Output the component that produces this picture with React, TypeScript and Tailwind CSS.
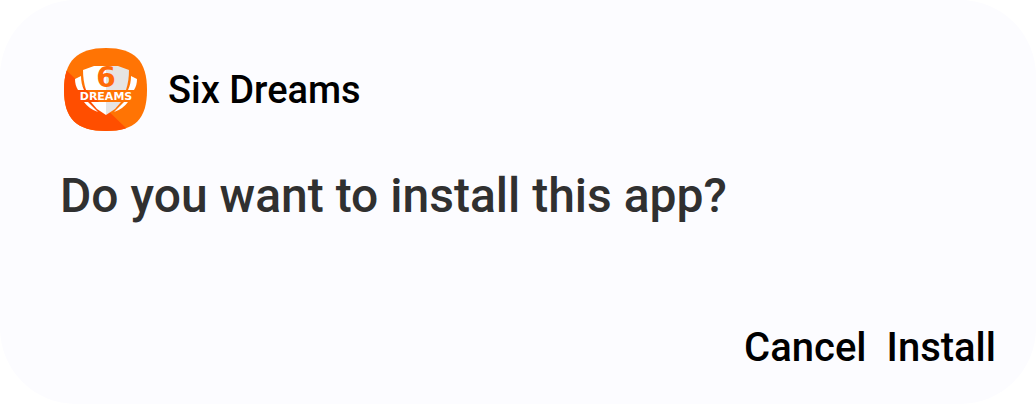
const AppLogo = () => (
  <svg viewBox="0 0 84 84" className="size-21 shrink-0" role="img" aria-label="Six Dreams logo">
    <defs>
      <clipPath id="tile">
        <path d="M42 0C71 0 83 13 83 42S71 83 42 83 0 71 0 42 13 0 42 0Z" />
      </clipPath>
    </defs>
    <g clipPath="url(#tile)">
      <rect width="84" height="84" fill="#ff7404" />
      <path d="M0 20L66 84H0Z" fill="#ff4e00" />
    </g>
    {/* shield, right half shaded */}
    <path d="M19 22L30 18H42V42H22C20 36 19 29 19 22Z" fill="#fff" />
    <path d="M65 22L54 18H42V42H62C64 36 65 29 65 22Z" fill="#e6e4e3" />
    <path d="M11 31L17 28C17 33 18 38 20 42H14C12 39 11 35 11 31Z" fill="#fff" />
    <path d="M73 31L67 28C67 33 66 38 64 42H70C72 39 73 35 73 31Z" fill="#fff" />
    <path d="M27 54H42V67L33 61Z" fill="#fff" />
    <path d="M57 54H42V67L51 61Z" fill="#e6e4e3" />
    <path d="M20 54H24L34 64Q25 61 20 54Z" fill="#fff" />
    <path d="M64 54H60L50 64Q59 61 64 54Z" fill="#fff" />
    <text x="42" y="39" textAnchor="middle" fill="#ff6a08" className="font-['DejaVu_Sans'] text-[28px] font-bold">
      6
    </text>
    <text x="42" y="52" textAnchor="middle" fill="#fff" className="font-['DejaVu_Sans'] text-[11px] font-bold">
      DREAMS
    </text>
  </svg>
);

type ActionButtonProps = {
  label: string;
};

const ActionButton = ({ label }: ActionButtonProps) => (
  <button type="button" className="cursor-pointer text-[40px] leading-12 font-medium text-black">
    {label}
  </button>
);

export default function App() {
  return (
    <div className="min-h-screen bg-white font-['Roboto',sans-serif]">
      <main
        role="dialog"
        aria-labelledby="install-title"
        className="flex min-h-screen flex-col rounded-[76px] bg-[#fcfcff] pt-12 pr-10 pb-8 pl-15"
      >
        <div className="flex items-center gap-5 pl-1">
          <AppLogo />
          <span className="text-[38px] leading-12 font-medium text-black">Six Dreams</span>
        </div>
        <h1 id="install-title" className="mt-8 text-[48px] leading-16 font-medium text-[#303030]">
          Do you want to install this app?
        </h1>
        <div className="mt-auto flex justify-end gap-5">
          <ActionButton label="Cancel" />
          <ActionButton label="Install" />
        </div>
      </main>
    </div>
  );
}
